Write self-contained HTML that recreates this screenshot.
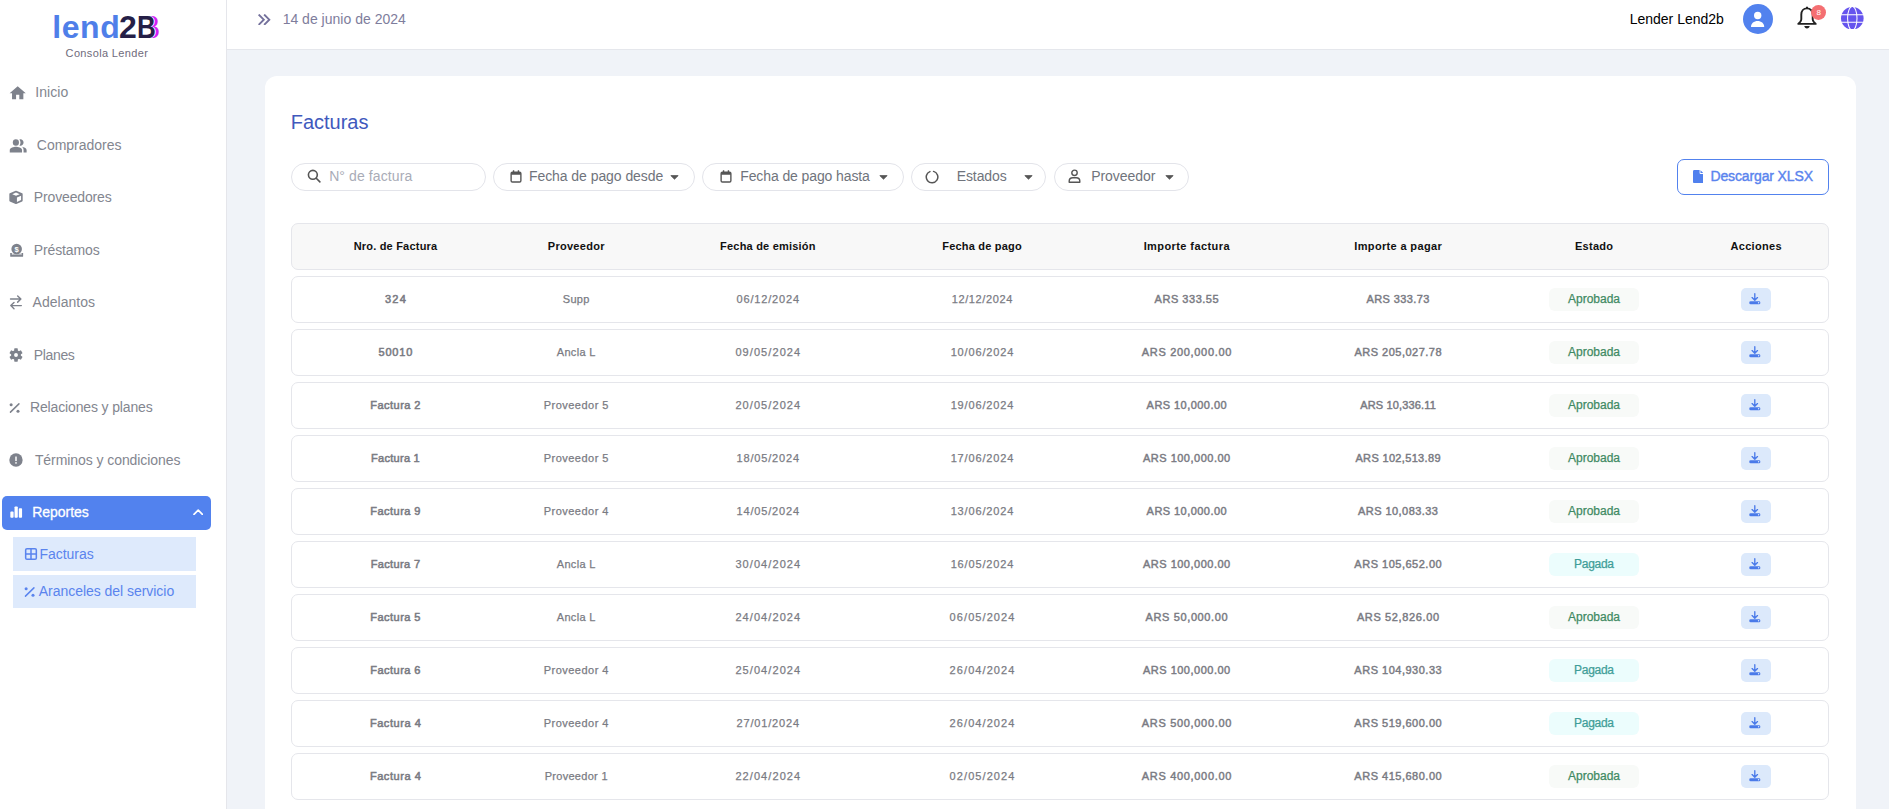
<!DOCTYPE html>
<html lang="es"><head><meta charset="utf-8"><title>Facturas - Consola Lender</title>
<style>
html,body{margin:0;padding:0}
body{width:1889px;height:809px;overflow:hidden;position:relative;background:#f0f3f8;font-family:"Liberation Sans",Arial,sans-serif}
.a{position:absolute;display:block}
.t{position:absolute;white-space:nowrap;line-height:20px;height:20px}
.b{position:absolute;box-sizing:border-box}
#side{left:0;top:0;width:227px;height:809px;background:#fff;border-right:1px solid #e5e6eb}
#top{left:227px;top:0;width:1662px;height:50px;background:#fff;border-bottom:1px solid #e5e7ec}
#card{left:265px;top:76px;width:1591px;height:760px;background:#fff;border-radius:12px}
.pill{height:28px;top:163px;border:1px solid #e3e4ea;border-radius:14px;background:#fff}
.row{left:291px;width:1538px;height:47px;border:1px solid #e5e6eb;border-radius:7px;background:#fff}
.hd{background:#f8f8f8}
.bdg{width:90px;height:23px;border-radius:6px;left:1549px}
.ap{background:#f8faf8}
.pg{background:#ecfdfd}
.act{left:1741px;width:30px;height:23px;border-radius:5px;background:#dce9fb}

</style></head>
<body>
<aside aria-label="Menú lateral">
<div id="side" class="b"></div>
<div class="t" aria-hidden="true" style="left:147px;top:8px;width:16px;height:36px;overflow:hidden"><div class="t" style="left:-6.07px;top:-1.02px;height:40px;line-height:40px;font-size:32px;font-weight:700;color:#d31ff6;transform-origin:0 0;transform:scaleX(0.815)">B</div><div class="t" style="left:-9.07px;top:-1.02px;height:40px;line-height:40px;font-size:32px;font-weight:700;color:#fff;transform-origin:0 0;transform:scaleX(0.815)">B</div></div>
<div class="t" style="left:136.53px;top:6.98px;height:40px;line-height:40px;font-size:32px;font-weight:700;color:#251f47;transform-origin:0 0;transform:scaleX(0.815)">B</div>
<svg class="a" style="left:8.0px;top:83.9px" width="19.4" height="18.3" viewBox="0 0 24 24" preserveAspectRatio="none"><path fill="#7e828c" d="M10 20v-6h4v6h5v-8h3L12 3 2 12h3v8z"/></svg>
<svg class="a" style="left:8.9px;top:135.6px" width="18.4" height="19.7" viewBox="0 0 24 24" preserveAspectRatio="none"><g fill="#7e828c"><path d="M16.67 13.13C18.04 14.06 19 15.32 19 17v3h4v-3c0-2.18-3.57-3.47-6.33-3.87z"/><circle cx="9" cy="8" r="4"/><path d="M9 13c-2.67 0-8 1.34-8 4v3h16v-3c0-2.66-5.33-4-8-4z"/><path d="M15 12c2.21 0 4-1.79 4-4s-1.79-4-4-4c-.47 0-.91.1-1.33.24C14.500 5.27 15 6.580 15 8s-.5 2.730-1.330 3.760c.42.140.86.240 1.330.240z"/></g></svg>
<svg class="a" style="left:8.4px;top:189.45px" width="16" height="16.8" viewBox="0 0 24 24" preserveAspectRatio="none"><path fill="#7e828c" stroke="#7e828c" stroke-width="2.400" stroke-linejoin="round" d="M12 3.600 20.800 7.200v9.400L12 20.400 3.200 16.600V7.200z"/><path fill="#fff" d="M12 5.100 17.600 7.400 12 9.800 6.400 7.400z"/><path fill="#fff" d="M13.400 12.200 19.600 9.600v6.200l-6.200 2.600z"/></svg>
<svg class="a" style="left:8.5px;top:242.4px" width="16" height="16" viewBox="0 0 24 24" ><circle cx="11.500" cy="10.600" r="7.900" fill="#7e828c"/><path fill="#7e828c" d="M1.800 16.400h2.500v2.600h14.400v-2.600h2.500v4.800a1 1 0 0 1-1 1H2.800a1 1 0 0 1-1-1z"/><path stroke="#7e828c" stroke-width="1" d="M5 18.200h13"/><text x="11.500" y="14.700" text-anchor="middle" font-family="Liberation Sans, Arial, sans-serif" font-weight="700" font-size="11.500" fill="#fff">$</text></svg>
<svg class="a" style="left:8.1px;top:294.1px" width="16" height="16" viewBox="0 0 24 24" ><g fill="none" stroke="#7e828c" stroke-width="2.150" stroke-linecap="round" stroke-linejoin="round"><path d="M3.800 7.600h15.200M14.500 3l4.800 4.600-4.800 4.600"/><path d="M20 17.400H4.500M9 12.800 4.200 17.400 9 22"/></g></svg>
<svg class="a" style="left:8.35px;top:347.3px" width="16" height="16" viewBox="0 0 24 24" ><g transform="translate(12 12)" fill="#7e828c"><circle r="7.300"/><rect x="-2.700" y="-10" width="5.400" height="6" rx="1" transform="rotate(0)"/><rect x="-2.700" y="-10" width="5.400" height="6" rx="1" transform="rotate(60)"/><rect x="-2.700" y="-10" width="5.400" height="6" rx="1" transform="rotate(120)"/><rect x="-2.700" y="-10" width="5.400" height="6" rx="1" transform="rotate(180)"/><rect x="-2.700" y="-10" width="5.400" height="6" rx="1" transform="rotate(240)"/><rect x="-2.700" y="-10" width="5.400" height="6" rx="1" transform="rotate(300)"/><circle r="2.900" fill="#fff"/></g></svg>
<svg class="a" style="left:7.3px;top:399.5px" width="16" height="16" viewBox="0 0 24 24" ><path stroke="#7e828c" stroke-width="2.200" stroke-linecap="round" d="M5.200 18.200 17.900 5.800"/><circle cx="6.200" cy="7.100" r="2.300" fill="#7e828c"/><circle cx="16.500" cy="16.800" r="2.300" fill="#7e828c"/></svg>
<svg class="a" style="left:8.35px;top:452.35px" width="16" height="16" viewBox="0 0 24 24" ><circle cx="12" cy="12" r="10" fill="#7e828c"/><rect x="10.900" y="6.800" width="2.200" height="6.800" fill="#fff"/><rect x="10.900" y="15.200" width="2.200" height="2.300" fill="#fff"/></svg>
<div class="b" style="left:2px;top:496px;width:209px;height:34px;border-radius:5px;background:#5282ee"></div>
<svg class="a" style="left:8.5px;top:503.3px" width="16" height="16" viewBox="0 0 24 24" ><g fill="#fff"><rect x="2" y="12.800" width="4.900" height="9.200" rx="1.300"/><rect x="8.300" y="5.200" width="4.900" height="16.800" rx="1.300"/><rect x="14.700" y="7.800" width="4.900" height="14.200" rx="1.300"/></g></svg>
<svg class="a" style="left:192.5px;top:509px" width="10.4" height="6.4" viewBox="0 0 10.400 6.400" ><path fill="none" stroke="#fff" stroke-width="1.700" stroke-linecap="round" stroke-linejoin="round" d="M1 5.400 5.200 1.200 9.400 5.400"/></svg>
<div class="b" style="left:13px;top:537px;width:183px;height:34px;background:#deeafc"></div>
<div class="b" style="left:13px;top:575px;width:183px;height:33px;background:#deeafc"></div>
<svg class="a" style="left:22.8px;top:545.5px" width="16" height="16" viewBox="0 0 24 24" ><g fill="none" stroke="#5a84ee" stroke-width="2.300"><rect x="4" y="4" width="16" height="16" rx="2"/><path d="M12 4v16M4 12h16"/></g></svg>
<svg class="a" style="left:22.2px;top:583.7px" width="16" height="16" viewBox="0 0 24 24" ><path stroke="#5a84ee" stroke-width="2.200" stroke-linecap="round" d="M5.200 18.200 17.900 5.800"/><circle cx="6.200" cy="7.100" r="2.300" fill="#5a84ee"/><circle cx="16.500" cy="16.800" r="2.300" fill="#5a84ee"/></svg>
<div class="t" style="font-size:32px;color:#4f7fe9;font-weight:700;letter-spacing:0.613px;left:52.20px;top:16.98px;">lend</div>
<div class="t" style="font-size:32px;color:#251f47;font-weight:700;left:119.10px;top:16.98px;">2</div>
<div class="t" style="font-size:11px;color:#6f6b7c;letter-spacing:0.359px;left:65.59px;top:43.20px;">Consola Lender</div>
<div class="t" style="font-size:14px;color:#83868f;letter-spacing:0.061px;left:35.23px;top:82.35px;">Inicio</div>
<div class="t" style="font-size:14px;color:#83868f;letter-spacing:-0.024px;left:36.83px;top:134.85px;">Compradores</div>
<div class="t" style="font-size:14px;color:#83868f;letter-spacing:-0.150px;left:33.83px;top:187.35px;">Proveedores</div>
<div class="t" style="font-size:14px;color:#83868f;letter-spacing:-0.129px;left:33.83px;top:239.85px;">Préstamos</div>
<div class="t" style="font-size:14px;color:#83868f;letter-spacing:0.026px;left:32.60px;top:292.35px;">Adelantos</div>
<div class="t" style="font-size:14px;color:#83868f;letter-spacing:-0.365px;left:33.83px;top:344.85px;">Planes</div>
<div class="t" style="font-size:14px;color:#83868f;letter-spacing:-0.139px;left:29.93px;top:397.35px;">Relaciones y planes</div>
<div class="t" style="font-size:14px;color:#83868f;letter-spacing:-0.070px;left:34.90px;top:449.85px;">Términos y condiciones</div>
<div class="t" style="font-size:14px;color:#fff;-webkit-text-stroke:0.3px #fff;letter-spacing:-0.018px;left:32.13px;top:502.25px;">Reportes</div>
<div class="t" style="font-size:14px;color:#5a84ee;letter-spacing:-0.040px;left:39.53px;top:544.20px;">Facturas</div>
<div class="t" style="font-size:14px;color:#5a84ee;letter-spacing:-0.037px;left:38.80px;top:581.20px;">Aranceles del servicio</div>
</aside>
<header aria-label="Barra superior">
<div id="top" class="b"></div>
<svg class="a" style="left:258.3px;top:13.8px" width="13" height="11.4" viewBox="0 0 13 11.400" ><g fill="none" stroke="#74719c" stroke-width="1.900" stroke-linecap="square" stroke-linejoin="miter"><path d="M1.300 1.200 5.800 5.700 1.300 10.200"/><path d="M6.800 1.200 11.300 5.700 6.800 10.200"/></g></svg>
<svg class="a" style="left:1743.1px;top:4px" width="30" height="30" viewBox="0 0 30 30" ><circle cx="15" cy="15" r="15" fill="#5282ee"/><circle cx="14.700" cy="11.500" r="3.700" fill="#fff"/><path fill="#fff" d="M8 23c0-3.600 3-5.900 6.600-5.900s6.600 2.300 6.600 5.900z"/></svg>
<svg class="a" style="left:1796.8px;top:6.4px" width="20" height="23" viewBox="0 0 20 23" ><path fill="none" stroke="#222" stroke-width="1.900" stroke-linejoin="round" d="M10 2.400c-3.500 0-5.700 2.700-5.700 6.200v4.600c0 1.200-.5 2-1.300 2.900L1.300 17.900h17.400l-1.700-1.800c-.8-.9-1.300-1.700-1.300-2.900V8.600c0-3.500-2.200-6.200-5.700-6.200z"/><path fill="#222" d="M9 0.700h2v1.900H9z"/><path fill="#222" d="M7.300 20.100h5.400c-.2 1.500-1.300 2.400-2.700 2.400s-2.500-.9-2.700-2.400z"/></svg>
<div class="b" style="left:1811.3px;top:5px;width:14.8px;height:14.8px;border-radius:50%;background:#f46f72"></div>
<svg class="a" style="left:1841.0px;top:6.899999999999999px" width="22.6" height="22.6" viewBox="0 0 24 24" ><circle cx="12" cy="12" r="12" fill="#6554ee"/><g fill="none" stroke="#fff" stroke-width="1.100"><ellipse cx="12" cy="12" rx="5" ry="12.600"/><path d="M0 8.200h24M0 16.200h24"/></g></svg>
<div class="t" style="font-size:14px;color:#7e7d9c;letter-spacing:0.011px;left:282.63px;top:9.35px;">14 de junio de 2024</div>
<div class="t" style="font-size:14px;color:#000;left:1629.70px;top:9.45px;">Lender Lend2b</div>
<div class="t" style="font-size:8px;color:#fff;left:1668.80px;width:300px;text-align:center;top:2.54px;">8</div>
</header>
<main aria-label="Facturas">
<div id="card" class="b"></div>
<div class="b pill" style="left:291px;width:195px"></div>
<svg class="a" style="left:306.7px;top:168.9px" width="14.2" height="14.2" viewBox="0 0 15 15" ><g fill="none" stroke="#555" stroke-width="1.700" stroke-linecap="round"><circle cx="6.200" cy="6.200" r="4.700"/><path d="M9.800 9.800 13.600 13.600"/></g></svg>
<div class="b pill" style="left:493px;width:202px"></div>
<svg class="a" style="left:509.9px;top:169.9px" width="12" height="12.9" viewBox="0 0 13 14" ><g fill="none" stroke="#555" stroke-width="1.500"><rect x="1.200" y="2.400" width="10.600" height="10.600" rx="1.400"/></g><path fill="#555" d="M1.200 2.400h10.600v2.800H1.200zM3.100 0.300h1.500v2.500H3.100zM8.400 0.300h1.500v2.500H8.400z"/></svg>
<svg class="a" style="left:670.2px;top:174.9px" width="9" height="5" viewBox="0 0 9 5" ><path fill="#555" stroke="#555" stroke-width="0.800" stroke-linejoin="round" d="M0.800 0.600h7.400L4.500 4.200z"/></svg>
<div class="b pill" style="left:702px;width:202px"></div>
<svg class="a" style="left:719.9px;top:169.9px" width="12" height="12.9" viewBox="0 0 13 14" ><g fill="none" stroke="#555" stroke-width="1.500"><rect x="1.200" y="2.400" width="10.600" height="10.600" rx="1.400"/></g><path fill="#555" d="M1.200 2.400h10.600v2.800H1.200zM3.100 0.300h1.500v2.500H3.100zM8.400 0.300h1.500v2.500H8.400z"/></svg>
<svg class="a" style="left:878.8px;top:174.9px" width="9" height="5" viewBox="0 0 9 5" ><path fill="#555" stroke="#555" stroke-width="0.800" stroke-linejoin="round" d="M0.800 0.600h7.400L4.500 4.200z"/></svg>
<div class="b pill" style="left:911px;width:135px"></div>
<svg class="a" style="left:924.7px;top:169.7px" width="14" height="14" viewBox="0 0 14 14" ><path fill="none" stroke="#555" stroke-width="1.500" stroke-linecap="round" d="M8.600 1.400A5.800 5.800 0 1 1 4.900 1.600"/></svg>
<svg class="a" style="left:1023.8px;top:174.9px" width="9" height="5" viewBox="0 0 9 5" ><path fill="#555" stroke="#555" stroke-width="0.800" stroke-linejoin="round" d="M0.800 0.600h7.400L4.500 4.200z"/></svg>
<div class="b pill" style="left:1054px;width:135px"></div>
<svg class="a" style="left:1068.3px;top:169.4px" width="13" height="14" viewBox="0 0 13 14" ><g fill="none" stroke="#555" stroke-width="1.400"><circle cx="6.500" cy="3.800" r="2.700"/><path stroke-linejoin="round" d="M1.200 13.200v-1.200c0-2 1.600-3.200 3.600-3.200h3.400c2 0 3.600 1.200 3.600 3.200v1.200z"/></g></svg>
<svg class="a" style="left:1165.4px;top:174.9px" width="9" height="5" viewBox="0 0 9 5" ><path fill="#555" stroke="#555" stroke-width="0.800" stroke-linejoin="round" d="M0.800 0.600h7.400L4.500 4.200z"/></svg>
<div class="b" style="left:1677px;top:159px;width:152px;height:36px;border:1px solid #5282ee;border-radius:7px;background:#fff"></div>
<svg class="a" style="left:1692.8px;top:170px" width="10.4" height="13.2" viewBox="0 0 10.400 13.200" ><path fill="#5080ee" d="M1.400 0h5.200v3.000a1 1 0 0 0 1 1h2.800v7.800a1.400 1.400 0 0 1-1.400 1.400H1.400A1.400 1.400 0 0 1 0 11.800V1.400A1.400 1.400 0 0 1 1.400 0z"/><path fill="#5080ee" d="M7.500 0.200 10.200 3.000H7.500z"/></svg>
<div class="b row hd" style="top:223px"></div>
<div class="b row" style="top:276px"></div>
<div class="b bdg ap" style="top:288px"></div>
<div class="b act" style="top:288px"></div>
<svg class="a" style="left:1749.4px;top:293.4px" width="12" height="11.6" viewBox="0 0 12 11.600" ><g fill="none" stroke="#4a7ae9" stroke-width="1.350" stroke-linecap="round" stroke-linejoin="round"><path d="M5.800 0.800v6.200M3.100 4.600 5.800 7.300 8.500 4.600"/></g><rect x="0.300" y="8.200" width="11" height="3" rx="1.300" fill="#4a7ae9"/><circle cx="9.600" cy="9.700" r="0.700" fill="#dce9fb"/></svg>
<div class="b row" style="top:329px"></div>
<div class="b bdg ap" style="top:341px"></div>
<div class="b act" style="top:341px"></div>
<svg class="a" style="left:1749.4px;top:346.4px" width="12" height="11.6" viewBox="0 0 12 11.600" ><g fill="none" stroke="#4a7ae9" stroke-width="1.350" stroke-linecap="round" stroke-linejoin="round"><path d="M5.800 0.800v6.200M3.100 4.600 5.800 7.300 8.500 4.600"/></g><rect x="0.300" y="8.200" width="11" height="3" rx="1.300" fill="#4a7ae9"/><circle cx="9.600" cy="9.700" r="0.700" fill="#dce9fb"/></svg>
<div class="b row" style="top:382px"></div>
<div class="b bdg ap" style="top:394px"></div>
<div class="b act" style="top:394px"></div>
<svg class="a" style="left:1749.4px;top:399.4px" width="12" height="11.6" viewBox="0 0 12 11.600" ><g fill="none" stroke="#4a7ae9" stroke-width="1.350" stroke-linecap="round" stroke-linejoin="round"><path d="M5.800 0.800v6.200M3.100 4.600 5.800 7.300 8.500 4.600"/></g><rect x="0.300" y="8.200" width="11" height="3" rx="1.300" fill="#4a7ae9"/><circle cx="9.600" cy="9.700" r="0.700" fill="#dce9fb"/></svg>
<div class="b row" style="top:435px"></div>
<div class="b bdg ap" style="top:447px"></div>
<div class="b act" style="top:447px"></div>
<svg class="a" style="left:1749.4px;top:452.4px" width="12" height="11.6" viewBox="0 0 12 11.600" ><g fill="none" stroke="#4a7ae9" stroke-width="1.350" stroke-linecap="round" stroke-linejoin="round"><path d="M5.800 0.800v6.200M3.100 4.600 5.800 7.300 8.500 4.600"/></g><rect x="0.300" y="8.200" width="11" height="3" rx="1.300" fill="#4a7ae9"/><circle cx="9.600" cy="9.700" r="0.700" fill="#dce9fb"/></svg>
<div class="b row" style="top:488px"></div>
<div class="b bdg ap" style="top:500px"></div>
<div class="b act" style="top:500px"></div>
<svg class="a" style="left:1749.4px;top:505.4px" width="12" height="11.6" viewBox="0 0 12 11.600" ><g fill="none" stroke="#4a7ae9" stroke-width="1.350" stroke-linecap="round" stroke-linejoin="round"><path d="M5.800 0.800v6.200M3.100 4.600 5.800 7.300 8.500 4.600"/></g><rect x="0.300" y="8.200" width="11" height="3" rx="1.300" fill="#4a7ae9"/><circle cx="9.600" cy="9.700" r="0.700" fill="#dce9fb"/></svg>
<div class="b row" style="top:541px"></div>
<div class="b bdg pg" style="top:553px"></div>
<div class="b act" style="top:553px"></div>
<svg class="a" style="left:1749.4px;top:558.4px" width="12" height="11.6" viewBox="0 0 12 11.600" ><g fill="none" stroke="#4a7ae9" stroke-width="1.350" stroke-linecap="round" stroke-linejoin="round"><path d="M5.800 0.800v6.200M3.100 4.600 5.800 7.300 8.500 4.600"/></g><rect x="0.300" y="8.200" width="11" height="3" rx="1.300" fill="#4a7ae9"/><circle cx="9.600" cy="9.700" r="0.700" fill="#dce9fb"/></svg>
<div class="b row" style="top:594px"></div>
<div class="b bdg ap" style="top:606px"></div>
<div class="b act" style="top:606px"></div>
<svg class="a" style="left:1749.4px;top:611.4px" width="12" height="11.6" viewBox="0 0 12 11.600" ><g fill="none" stroke="#4a7ae9" stroke-width="1.350" stroke-linecap="round" stroke-linejoin="round"><path d="M5.800 0.800v6.200M3.100 4.600 5.800 7.300 8.500 4.600"/></g><rect x="0.300" y="8.200" width="11" height="3" rx="1.300" fill="#4a7ae9"/><circle cx="9.600" cy="9.700" r="0.700" fill="#dce9fb"/></svg>
<div class="b row" style="top:647px"></div>
<div class="b bdg pg" style="top:659px"></div>
<div class="b act" style="top:659px"></div>
<svg class="a" style="left:1749.4px;top:664.4px" width="12" height="11.6" viewBox="0 0 12 11.600" ><g fill="none" stroke="#4a7ae9" stroke-width="1.350" stroke-linecap="round" stroke-linejoin="round"><path d="M5.800 0.800v6.200M3.100 4.600 5.800 7.300 8.500 4.600"/></g><rect x="0.300" y="8.200" width="11" height="3" rx="1.300" fill="#4a7ae9"/><circle cx="9.600" cy="9.700" r="0.700" fill="#dce9fb"/></svg>
<div class="b row" style="top:700px"></div>
<div class="b bdg pg" style="top:712px"></div>
<div class="b act" style="top:712px"></div>
<svg class="a" style="left:1749.4px;top:717.4px" width="12" height="11.6" viewBox="0 0 12 11.600" ><g fill="none" stroke="#4a7ae9" stroke-width="1.350" stroke-linecap="round" stroke-linejoin="round"><path d="M5.800 0.800v6.200M3.100 4.600 5.800 7.300 8.500 4.600"/></g><rect x="0.300" y="8.200" width="11" height="3" rx="1.300" fill="#4a7ae9"/><circle cx="9.600" cy="9.700" r="0.700" fill="#dce9fb"/></svg>
<div class="b row" style="top:753px"></div>
<div class="b bdg ap" style="top:765px"></div>
<div class="b act" style="top:765px"></div>
<svg class="a" style="left:1749.4px;top:770.4px" width="12" height="11.6" viewBox="0 0 12 11.600" ><g fill="none" stroke="#4a7ae9" stroke-width="1.350" stroke-linecap="round" stroke-linejoin="round"><path d="M5.800 0.800v6.200M3.100 4.600 5.800 7.300 8.500 4.600"/></g><rect x="0.300" y="8.200" width="11" height="3" rx="1.300" fill="#4a7ae9"/><circle cx="9.600" cy="9.700" r="0.700" fill="#dce9fb"/></svg>
<div class="t" style="font-size:20px;color:#4059bd;letter-spacing:-0.016px;left:290.70px;top:112.36px;">Facturas</div>
<div class="t" style="font-size:14px;color:#a9acb7;letter-spacing:0.110px;left:329.13px;top:166.35px;">N° de factura</div>
<div class="t" style="font-size:14px;color:#70747c;letter-spacing:-0.059px;left:528.93px;top:166.35px;">Fecha de pago desde</div>
<div class="t" style="font-size:14px;color:#70747c;letter-spacing:-0.103px;left:740.23px;top:166.35px;">Fecha de pago hasta</div>
<div class="t" style="font-size:14px;color:#70747c;letter-spacing:-0.101px;left:956.73px;top:166.35px;">Estados</div>
<div class="t" style="font-size:14px;color:#70747c;letter-spacing:-0.050px;left:1091.13px;top:166.35px;">Proveedor</div>
<div class="t" style="font-size:14px;color:#5a84ee;-webkit-text-stroke:0.4px #5a84ee;letter-spacing:-0.130px;left:1710.43px;top:166.35px;">Descargar XLSX</div>
<div class="t" style="font-size:11px;color:#111;font-weight:700;letter-spacing:0.203px;left:245.50px;width:300px;text-align:center;top:236.40px;">Nro. de Factura</div>
<div class="t" style="font-size:11px;color:#111;font-weight:700;letter-spacing:0.277px;left:426.24px;width:300px;text-align:center;top:236.40px;">Proveedor</div>
<div class="t" style="font-size:11px;color:#111;font-weight:700;letter-spacing:0.202px;left:617.90px;width:300px;text-align:center;top:236.40px;">Fecha de emisión</div>
<div class="t" style="font-size:11px;color:#111;font-weight:700;letter-spacing:0.200px;left:832.10px;width:300px;text-align:center;top:236.40px;">Fecha de pago</div>
<div class="t" style="font-size:11px;color:#111;font-weight:700;letter-spacing:0.418px;left:1036.81px;width:300px;text-align:center;top:236.40px;">Importe factura</div>
<div class="t" style="font-size:11px;color:#111;font-weight:700;letter-spacing:0.350px;left:1248.18px;width:300px;text-align:center;top:236.40px;">Importe a pagar</div>
<div class="t" style="font-size:11px;color:#111;font-weight:700;letter-spacing:0.290px;left:1444.14px;width:300px;text-align:center;top:236.40px;">Estado</div>
<div class="t" style="font-size:11px;color:#111;font-weight:700;letter-spacing:0.316px;left:1606.16px;width:300px;text-align:center;top:236.40px;">Acciones</div>
<div class="t" style="font-size:11px;color:#7a7b83;-webkit-text-stroke:0.55px #7a7b83;letter-spacing:1.213px;left:246.01px;width:300px;text-align:center;top:289.40px;">324</div>
<div class="t" style="font-size:11px;color:#7a7b83;-webkit-text-stroke:0.25px #7a7b83;letter-spacing:0.361px;left:426.28px;width:300px;text-align:center;top:289.40px;">Supp</div>
<div class="t" style="font-size:11px;color:#7a7b83;-webkit-text-stroke:0.25px #7a7b83;letter-spacing:0.847px;left:618.22px;width:300px;text-align:center;top:289.40px;">06/12/2024</div>
<div class="t" style="font-size:11px;color:#7a7b83;-webkit-text-stroke:0.25px #7a7b83;letter-spacing:0.614px;left:832.31px;width:300px;text-align:center;top:289.40px;">12/12/2024</div>
<div class="t" style="font-size:11px;color:#7a7b83;-webkit-text-stroke:0.45px #7a7b83;letter-spacing:0.529px;left:1036.86px;width:300px;text-align:center;top:289.40px;">ARS 333.55</div>
<div class="t" style="font-size:11px;color:#7a7b83;-webkit-text-stroke:0.45px #7a7b83;letter-spacing:0.395px;left:1248.20px;width:300px;text-align:center;top:289.40px;">ARS 333.73</div>
<div class="t" style="font-size:12px;color:#3f8a63;-webkit-text-stroke:0.25px #3f8a63;letter-spacing:-0.011px;left:1443.99px;width:300px;text-align:center;top:288.97px;">Aprobada</div>
<div class="t" style="font-size:11px;color:#7a7b83;-webkit-text-stroke:0.55px #7a7b83;letter-spacing:0.823px;left:245.81px;width:300px;text-align:center;top:342.40px;">50010</div>
<div class="t" style="font-size:11px;color:#7a7b83;-webkit-text-stroke:0.25px #7a7b83;letter-spacing:0.322px;left:426.26px;width:300px;text-align:center;top:342.40px;">Ancla L</div>
<div class="t" style="font-size:11px;color:#7a7b83;-webkit-text-stroke:0.25px #7a7b83;letter-spacing:1.080px;left:618.34px;width:300px;text-align:center;top:342.40px;">09/05/2024</div>
<div class="t" style="font-size:11px;color:#7a7b83;-webkit-text-stroke:0.25px #7a7b83;letter-spacing:0.847px;left:832.42px;width:300px;text-align:center;top:342.40px;">10/06/2024</div>
<div class="t" style="font-size:11px;color:#7a7b83;-webkit-text-stroke:0.45px #7a7b83;letter-spacing:0.673px;left:1036.94px;width:300px;text-align:center;top:342.40px;">ARS 200,000.00</div>
<div class="t" style="font-size:11px;color:#7a7b83;-webkit-text-stroke:0.45px #7a7b83;letter-spacing:0.489px;left:1248.24px;width:300px;text-align:center;top:342.40px;">ARS 205,027.78</div>
<div class="t" style="font-size:12px;color:#3f8a63;-webkit-text-stroke:0.25px #3f8a63;letter-spacing:-0.011px;left:1443.99px;width:300px;text-align:center;top:341.97px;">Aprobada</div>
<div class="t" style="font-size:11px;color:#7a7b83;-webkit-text-stroke:0.55px #7a7b83;letter-spacing:0.465px;left:245.63px;width:300px;text-align:center;top:395.40px;">Factura 2</div>
<div class="t" style="font-size:11px;color:#7a7b83;-webkit-text-stroke:0.25px #7a7b83;letter-spacing:0.475px;left:426.34px;width:300px;text-align:center;top:395.40px;">Proveedor 5</div>
<div class="t" style="font-size:11px;color:#7a7b83;-webkit-text-stroke:0.25px #7a7b83;letter-spacing:1.080px;left:618.34px;width:300px;text-align:center;top:395.40px;">20/05/2024</div>
<div class="t" style="font-size:11px;color:#7a7b83;-webkit-text-stroke:0.25px #7a7b83;letter-spacing:0.847px;left:832.42px;width:300px;text-align:center;top:395.40px;">19/06/2024</div>
<div class="t" style="font-size:11px;color:#7a7b83;-webkit-text-stroke:0.45px #7a7b83;letter-spacing:0.447px;left:1036.82px;width:300px;text-align:center;top:395.40px;">ARS 10,000.00</div>
<div class="t" style="font-size:11px;color:#7a7b83;-webkit-text-stroke:0.45px #7a7b83;letter-spacing:0.149px;left:1248.07px;width:300px;text-align:center;top:395.40px;">ARS 10,336.11</div>
<div class="t" style="font-size:12px;color:#3f8a63;-webkit-text-stroke:0.25px #3f8a63;letter-spacing:-0.011px;left:1443.99px;width:300px;text-align:center;top:394.97px;">Aprobada</div>
<div class="t" style="font-size:11px;color:#7a7b83;-webkit-text-stroke:0.55px #7a7b83;letter-spacing:0.277px;left:245.54px;width:300px;text-align:center;top:448.40px;">Factura 1</div>
<div class="t" style="font-size:11px;color:#7a7b83;-webkit-text-stroke:0.25px #7a7b83;letter-spacing:0.475px;left:426.34px;width:300px;text-align:center;top:448.40px;">Proveedor 5</div>
<div class="t" style="font-size:11px;color:#7a7b83;-webkit-text-stroke:0.25px #7a7b83;letter-spacing:0.847px;left:618.22px;width:300px;text-align:center;top:448.40px;">18/05/2024</div>
<div class="t" style="font-size:11px;color:#7a7b83;-webkit-text-stroke:0.25px #7a7b83;letter-spacing:0.847px;left:832.42px;width:300px;text-align:center;top:448.40px;">17/06/2024</div>
<div class="t" style="font-size:11px;color:#7a7b83;-webkit-text-stroke:0.45px #7a7b83;letter-spacing:0.504px;left:1036.85px;width:300px;text-align:center;top:448.40px;">ARS 100,000.00</div>
<div class="t" style="font-size:11px;color:#7a7b83;-webkit-text-stroke:0.45px #7a7b83;letter-spacing:0.335px;left:1248.17px;width:300px;text-align:center;top:448.40px;">ARS 102,513.89</div>
<div class="t" style="font-size:12px;color:#3f8a63;-webkit-text-stroke:0.25px #3f8a63;letter-spacing:-0.011px;left:1443.99px;width:300px;text-align:center;top:447.97px;">Aprobada</div>
<div class="t" style="font-size:11px;color:#7a7b83;-webkit-text-stroke:0.55px #7a7b83;letter-spacing:0.465px;left:245.63px;width:300px;text-align:center;top:501.40px;">Factura 9</div>
<div class="t" style="font-size:11px;color:#7a7b83;-webkit-text-stroke:0.25px #7a7b83;letter-spacing:0.475px;left:426.34px;width:300px;text-align:center;top:501.40px;">Proveedor 4</div>
<div class="t" style="font-size:11px;color:#7a7b83;-webkit-text-stroke:0.25px #7a7b83;letter-spacing:0.847px;left:618.22px;width:300px;text-align:center;top:501.40px;">14/05/2024</div>
<div class="t" style="font-size:11px;color:#7a7b83;-webkit-text-stroke:0.25px #7a7b83;letter-spacing:0.847px;left:832.42px;width:300px;text-align:center;top:501.40px;">13/06/2024</div>
<div class="t" style="font-size:11px;color:#7a7b83;-webkit-text-stroke:0.45px #7a7b83;letter-spacing:0.447px;left:1036.82px;width:300px;text-align:center;top:501.40px;">ARS 10,000.00</div>
<div class="t" style="font-size:11px;color:#7a7b83;-webkit-text-stroke:0.45px #7a7b83;letter-spacing:0.447px;left:1248.22px;width:300px;text-align:center;top:501.40px;">ARS 10,083.33</div>
<div class="t" style="font-size:12px;color:#3f8a63;-webkit-text-stroke:0.25px #3f8a63;letter-spacing:-0.011px;left:1443.99px;width:300px;text-align:center;top:500.97px;">Aprobada</div>
<div class="t" style="font-size:11px;color:#7a7b83;-webkit-text-stroke:0.55px #7a7b83;letter-spacing:0.365px;left:245.58px;width:300px;text-align:center;top:554.40px;">Factura 7</div>
<div class="t" style="font-size:11px;color:#7a7b83;-webkit-text-stroke:0.25px #7a7b83;letter-spacing:0.322px;left:426.26px;width:300px;text-align:center;top:554.40px;">Ancla L</div>
<div class="t" style="font-size:11px;color:#7a7b83;-webkit-text-stroke:0.25px #7a7b83;letter-spacing:1.080px;left:618.34px;width:300px;text-align:center;top:554.40px;">30/04/2024</div>
<div class="t" style="font-size:11px;color:#7a7b83;-webkit-text-stroke:0.25px #7a7b83;letter-spacing:0.847px;left:832.42px;width:300px;text-align:center;top:554.40px;">16/05/2024</div>
<div class="t" style="font-size:11px;color:#7a7b83;-webkit-text-stroke:0.45px #7a7b83;letter-spacing:0.504px;left:1036.85px;width:300px;text-align:center;top:554.40px;">ARS 100,000.00</div>
<div class="t" style="font-size:11px;color:#7a7b83;-webkit-text-stroke:0.45px #7a7b83;letter-spacing:0.504px;left:1248.25px;width:300px;text-align:center;top:554.40px;">ARS 105,652.00</div>
<div class="t" style="font-size:12px;color:#3f9d98;-webkit-text-stroke:0.25px #3f9d98;letter-spacing:-0.281px;left:1443.86px;width:300px;text-align:center;top:553.97px;">Pagada</div>
<div class="t" style="font-size:11px;color:#7a7b83;-webkit-text-stroke:0.55px #7a7b83;letter-spacing:0.465px;left:245.63px;width:300px;text-align:center;top:607.40px;">Factura 5</div>
<div class="t" style="font-size:11px;color:#7a7b83;-webkit-text-stroke:0.25px #7a7b83;letter-spacing:0.322px;left:426.26px;width:300px;text-align:center;top:607.40px;">Ancla L</div>
<div class="t" style="font-size:11px;color:#7a7b83;-webkit-text-stroke:0.25px #7a7b83;letter-spacing:1.080px;left:618.34px;width:300px;text-align:center;top:607.40px;">24/04/2024</div>
<div class="t" style="font-size:11px;color:#7a7b83;-webkit-text-stroke:0.25px #7a7b83;letter-spacing:1.080px;left:832.54px;width:300px;text-align:center;top:607.40px;">06/05/2024</div>
<div class="t" style="font-size:11px;color:#7a7b83;-webkit-text-stroke:0.45px #7a7b83;letter-spacing:0.630px;left:1036.91px;width:300px;text-align:center;top:607.40px;">ARS 50,000.00</div>
<div class="t" style="font-size:11px;color:#7a7b83;-webkit-text-stroke:0.45px #7a7b83;letter-spacing:0.630px;left:1248.32px;width:300px;text-align:center;top:607.40px;">ARS 52,826.00</div>
<div class="t" style="font-size:12px;color:#3f8a63;-webkit-text-stroke:0.25px #3f8a63;letter-spacing:-0.011px;left:1443.99px;width:300px;text-align:center;top:606.97px;">Aprobada</div>
<div class="t" style="font-size:11px;color:#7a7b83;-webkit-text-stroke:0.55px #7a7b83;letter-spacing:0.465px;left:245.63px;width:300px;text-align:center;top:660.40px;">Factura 6</div>
<div class="t" style="font-size:11px;color:#7a7b83;-webkit-text-stroke:0.25px #7a7b83;letter-spacing:0.475px;left:426.34px;width:300px;text-align:center;top:660.40px;">Proveedor 4</div>
<div class="t" style="font-size:11px;color:#7a7b83;-webkit-text-stroke:0.25px #7a7b83;letter-spacing:1.080px;left:618.34px;width:300px;text-align:center;top:660.40px;">25/04/2024</div>
<div class="t" style="font-size:11px;color:#7a7b83;-webkit-text-stroke:0.25px #7a7b83;letter-spacing:1.080px;left:832.54px;width:300px;text-align:center;top:660.40px;">26/04/2024</div>
<div class="t" style="font-size:11px;color:#7a7b83;-webkit-text-stroke:0.45px #7a7b83;letter-spacing:0.504px;left:1036.85px;width:300px;text-align:center;top:660.40px;">ARS 100,000.00</div>
<div class="t" style="font-size:11px;color:#7a7b83;-webkit-text-stroke:0.45px #7a7b83;letter-spacing:0.504px;left:1248.25px;width:300px;text-align:center;top:660.40px;">ARS 104,930.33</div>
<div class="t" style="font-size:12px;color:#3f9d98;-webkit-text-stroke:0.25px #3f9d98;letter-spacing:-0.281px;left:1443.86px;width:300px;text-align:center;top:659.97px;">Pagada</div>
<div class="t" style="font-size:11px;color:#7a7b83;-webkit-text-stroke:0.55px #7a7b83;letter-spacing:0.565px;left:245.68px;width:300px;text-align:center;top:713.40px;">Factura 4</div>
<div class="t" style="font-size:11px;color:#7a7b83;-webkit-text-stroke:0.25px #7a7b83;letter-spacing:0.475px;left:426.34px;width:300px;text-align:center;top:713.40px;">Proveedor 4</div>
<div class="t" style="font-size:11px;color:#7a7b83;-webkit-text-stroke:0.25px #7a7b83;letter-spacing:0.847px;left:618.22px;width:300px;text-align:center;top:713.40px;">27/01/2024</div>
<div class="t" style="font-size:11px;color:#7a7b83;-webkit-text-stroke:0.25px #7a7b83;letter-spacing:1.080px;left:832.54px;width:300px;text-align:center;top:713.40px;">26/04/2024</div>
<div class="t" style="font-size:11px;color:#7a7b83;-webkit-text-stroke:0.45px #7a7b83;letter-spacing:0.673px;left:1036.94px;width:300px;text-align:center;top:713.40px;">ARS 500,000.00</div>
<div class="t" style="font-size:11px;color:#7a7b83;-webkit-text-stroke:0.45px #7a7b83;letter-spacing:0.504px;left:1248.25px;width:300px;text-align:center;top:713.40px;">ARS 519,600.00</div>
<div class="t" style="font-size:12px;color:#3f9d98;-webkit-text-stroke:0.25px #3f9d98;letter-spacing:-0.281px;left:1443.86px;width:300px;text-align:center;top:712.97px;">Pagada</div>
<div class="t" style="font-size:11px;color:#7a7b83;-webkit-text-stroke:0.55px #7a7b83;letter-spacing:0.565px;left:245.68px;width:300px;text-align:center;top:766.40px;">Factura 4</div>
<div class="t" style="font-size:11px;color:#7a7b83;-webkit-text-stroke:0.25px #7a7b83;letter-spacing:0.295px;left:426.25px;width:300px;text-align:center;top:766.40px;">Proveedor 1</div>
<div class="t" style="font-size:11px;color:#7a7b83;-webkit-text-stroke:0.25px #7a7b83;letter-spacing:1.080px;left:618.34px;width:300px;text-align:center;top:766.40px;">22/04/2024</div>
<div class="t" style="font-size:11px;color:#7a7b83;-webkit-text-stroke:0.25px #7a7b83;letter-spacing:1.080px;left:832.54px;width:300px;text-align:center;top:766.40px;">02/05/2024</div>
<div class="t" style="font-size:11px;color:#7a7b83;-webkit-text-stroke:0.45px #7a7b83;letter-spacing:0.673px;left:1036.94px;width:300px;text-align:center;top:766.40px;">ARS 400,000.00</div>
<div class="t" style="font-size:11px;color:#7a7b83;-webkit-text-stroke:0.45px #7a7b83;letter-spacing:0.504px;left:1248.25px;width:300px;text-align:center;top:766.40px;">ARS 415,680.00</div>
<div class="t" style="font-size:12px;color:#3f8a63;-webkit-text-stroke:0.25px #3f8a63;letter-spacing:-0.011px;left:1443.99px;width:300px;text-align:center;top:765.97px;">Aprobada</div>
</main>

</body></html>
